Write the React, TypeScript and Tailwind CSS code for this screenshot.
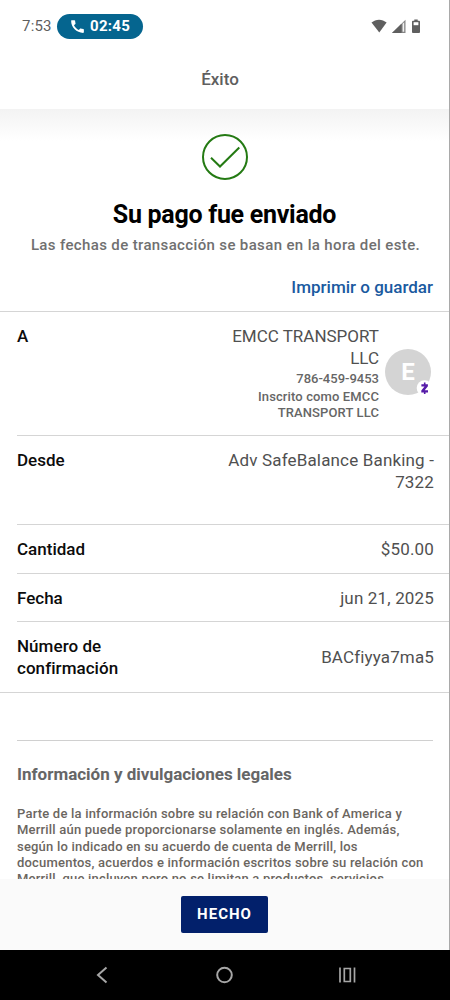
import React from "react";

function StatusBar() {
  return (
    <div className="h-[52px] shrink-0 flex items-center pl-[22px] pr-[28px] text-[#5f5f5f]">
      <span className="w-[35px] text-[15px] leading-none tracking-[0.2px] whitespace-nowrap">7:53</span>
      <div className="h-[25px] w-[86px] rounded-full bg-[#05658f] text-white flex items-center pl-[12px] gap-1">
        <svg className="w-[17px] h-[17px] shrink-0" viewBox="0 0 24 24" fill="currentColor">
          <path d="M20.01 15.38c-1.23 0-2.42-.2-3.53-.56-.35-.12-.74-.03-1.01.24l-1.57 1.97c-2.83-1.35-5.48-3.9-6.89-6.83l1.95-1.66c.27-.28.35-.67.24-1.02-.37-1.11-.56-2.3-.56-3.53 0-.54-.45-.99-.99-.99H4.19C3.65 3 3 3.24 3 3.99 3 13.28 10.73 21 20.01 21c.71 0 .99-.63.99-1.18v-3.45c0-.54-.45-.99-.99-.99z" />
        </svg>
        <span className="text-[15px] font-bold leading-none tracking-[0.3px] pt-px whitespace-nowrap">02:45</span>
      </div>
      <svg className="ml-auto w-[50px] h-[15px]" viewBox="0 0 50 15">
        <path d="M0.5 3.6C4.8-.3 11.3-.3 15.6 3.6L8.3 13.6z" fill="#5f5f5f" />
        <path d="M21 14L34.5 0.8V14z" fill="#858585" />
        <path d="M21 14L30.5 4.7V14z" fill="#5f5f5f" />
        <path d="M31.6 4.8L33.2 3.2V12.8H31.6z" fill="#f2f2f2" />
        <path d="M43.3 0.5h3.4v1.3h1.4q.9 0 .9 .9V13q0 1-.9 1h-6.2q-.9 0-.9-1V2.7q0-.9.9-.9h1.4z" fill="#5f5f5f" />
        <path d="M42.6 3.2h4.8v3h-4.8z" fill="#fff" />
      </svg>
    </div>
  );
}

function Row({ label, className, children }: { label: string; className: string; children: React.ReactNode }) {
  return (
    <div className={`ml-[17px] pr-[15px] shrink-0 flex justify-between border-b border-[#d5d5d5] leading-[22px] ${className}`}>
      <div className="w-[120px] text-[17px] font-medium text-[#0c0c0c]">{label}</div>
      <div className="text-[17px] text-right text-[#505050] tracking-[0.16px]">{children}</div>
    </div>
  );
}

export default function App() {
  return (
    <div className="w-[450px] h-[1000px] flex flex-col overflow-hidden bg-black font-['Roboto',sans-serif]">
      <div className="h-[950px] shrink-0 flex flex-col bg-white border-r border-[#a9a9a9] overflow-hidden">
        <StatusBar />
        <div className="h-[57px] shrink-0 flex justify-center pt-[16px] pr-[9px]">
          <h1 className="text-[17px] leading-[22px] font-medium text-[#5f5f5f]">Éxito</h1>
        </div>

        <div className="h-[770px] shrink-0 flex flex-col overflow-hidden">
          <div className="h-[202px] shrink-0 flex flex-col items-center bg-[linear-gradient(#f3f3f3,#fff_32px)] pt-[25px]">
            <svg className="w-[46px] h-[46px] shrink-0" viewBox="0 0 46 46" fill="none" stroke="#247a13" strokeWidth="2">
              <circle cx="23" cy="23" r="22" />
              <path d="M9 23.8L18 32.5L37.3 13.5" />
            </svg>
            <h2 className="mt-[20px] text-[25px] leading-[30px] font-bold text-black tracking-[-0.28px] whitespace-nowrap">
              Su pago fue enviado
            </h2>
            <p className="mt-[5px] pl-[2px] text-[15px] leading-[20px] font-medium text-[#707070] tracking-[0.36px] whitespace-nowrap">
              Las fechas de transacción se basan en la hora del este.
            </p>
            <a className="mt-[21px] self-end pr-4 text-[17px] leading-[22px] font-medium text-[#1a5aa0] whitespace-nowrap">
              Imprimir o guardar
            </a>
          </div>

          <div className="border-t border-[#d5d5d5] flex flex-col">
            <div className="ml-[17px] h-[124px] shrink-0 flex border-b border-[#d5d5d5] pt-[13px] text-[#505050]">
              <div className="w-[120px] text-[17px] leading-[22px] font-medium text-[#0c0c0c]">A</div>
              <div className="ml-auto text-right">
                <div className="text-[17px] leading-[22px]">EMCC TRANSPORT<br />LLC</div>
                <div className="text-[13px] leading-[18px] pt-px font-medium text-[#666]">786-459-9453</div>
                <div className="text-[13px] leading-[16px] pt-px font-medium text-[#666] tracking-[0.12px] whitespace-nowrap">
                  Inscrito como EMCC<br />TRANSPORT LLC
                </div>
              </div>
              <div className="relative ml-[6px] mr-[18px] mt-[24px] w-[46px] h-[46px] rounded-full bg-[#d4d4d4] text-white text-[24px] font-bold flex items-center justify-center">
                E
                <svg className="absolute left-[31px] top-[31px] w-[18px] h-[18px]" viewBox="0 0 18 18">
                  <circle cx="8.500" cy="8" r="7.800" fill="#fff" />
                  <path d="M5.4 4.3H11.9V6.300L8.700 10.200H12V12.400H5.300V10.400L8.500 6.400H5.400zM7.900 2.600H9.500V5H7.900zM7.900 12H9.500V14H7.900z" fill="#561ba8" />
                </svg>
              </div>
            </div>
            <Row label="Desde" className="h-[89px] pt-[13px]">
              Adv SafeBalance Banking -<br />7322
            </Row>
            <Row label="Cantidad" className="h-[49px] pt-[13px]">$50.00</Row>
            <Row label="Fecha" className="h-[48px] pt-[13px]">jun 21, 2025</Row>
            <div className="h-[71px] shrink-0 border-b border-[#d5d5d5] pl-[17px] pr-[15px] flex items-center justify-between text-[17px] leading-[22px]">
              <div className="w-[120px] font-medium text-[#0c0c0c] tracking-[0.05px]">Número de confirmación</div>
              <div className="text-[#505050] tracking-[0.14px]">BACfiyya7ma5</div>
            </div>
          </div>

          <div className="ml-[17px] mr-4 mt-[47px] border-t border-[#d0d0d0] pt-[22px]">
            <h3 className="text-[17px] leading-[22px] font-bold text-[#666] whitespace-nowrap">
              Información y divulgaciones legales
            </h3>
            <p className="mt-[21px] text-[13px] leading-[16.3px] font-medium text-[#6b665f] tracking-[0.2px] whitespace-nowrap">
              Parte de la información sobre su relación con Bank of America y<br />
              Merrill aún puede proporcionarse solamente en inglés. Además,<br />
              según lo indicado en su acuerdo de cuenta de Merrill, los<br />
              documentos, acuerdos e información escritos sobre su relación con<br />
              Merrill, que incluyen pero no se limitan a productos, servicios
            </p>
          </div>
        </div>

        <div className="h-[71px] shrink-0 bg-[#fafafa] flex justify-center pt-[17px]">
          <button className="w-[87px] h-[37px] rounded-[2px] bg-[#02206b] text-white text-[15px] font-bold tracking-[1px]">
            HECHO
          </button>
        </div>
      </div>

      <div className="h-[50px] shrink-0">
        <svg className="w-[450px] h-[50px]" viewBox="0 0 450 50" fill="none" stroke="#a6a6a6" strokeWidth="2">
          <path d="M106.5 17.5L98 25L106.5 32.5" />
          <circle cx="224.500" cy="25" r="7.300" />
          <path d="M340 17.500V32.500M354.500 17.500V32.500M344.300 18.500H350.300V31.500H344.300z" strokeWidth="1.700" />
        </svg>
      </div>
    </div>
  );
}
